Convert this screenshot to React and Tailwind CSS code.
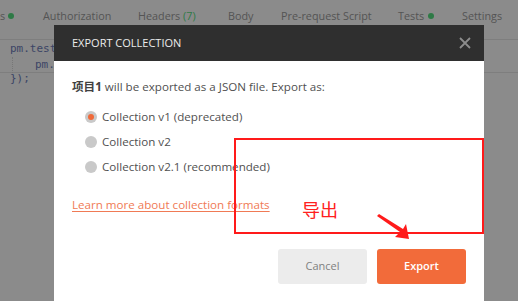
import React from "react";

const font = { fontFamily: '"Open Sans", "Noto Sans CJK SC", sans-serif' };

function Radio({ checked, label }) {
  return (
    <div className="flex h-[25px] items-center">
      <div className="ml-[13px] flex h-[12px] w-[12px] items-center justify-center rounded-full bg-[#c9c9c9]">
        {checked && <div className="h-[6px] w-[6px] rounded-full bg-[#f06a3a]" />}
      </div>
      <span className="ml-[5px] text-[11.6px] leading-[16px] text-[#505050]">{label}</span>
    </div>
  );
}

export default function App() {
  return (
    <div className="relative h-[301px] w-[518px] overflow-hidden bg-[#8b8b8b]" style={font}>
      {/* background page */}
      <div className="flex h-[40px] items-start border-b border-[#7e7e7e] pt-[8px] text-[10.8px] leading-[16px] text-[#545454]">
        <div className="flex w-[43px] items-center">
          <span>s</span>
          <span className="ml-[3px] h-[6px] w-[6px] rounded-full bg-[#2e7a46]" />
        </div>
        <div className="w-[95px]">Authorization</div>
        <div className="w-[90px]">
          Headers <span className="text-[#2e7a46]">(7)</span>
        </div>
        <div className="w-[53px]">Body</div>
        <div className="w-[117px]">Pre-request Script</div>
        <div className="flex w-[64px] items-center">
          <span>Tests</span>
          <span className="ml-[4px] h-[6px] w-[6px] rounded-full bg-[#2e7a46]" />
        </div>
        <div>Settings</div>
      </div>
      <div className="h-[33px] border-b border-[#7e7e7e] pl-[10px] pt-[1px] text-[11px] leading-[16px] text-[#3c4566]" style={{ fontFamily: '"DejaVu Sans Mono", monospace' }}>
        <div>pm.test(</div>
        <div className="ml-[2px] border-l border-dotted border-[#777] pl-[22px]">pm.r</div>
      </div>
      <div className="-mt-[2px] pl-[10px] text-[11px] leading-[16px] text-[#3c4566]" style={{ fontFamily: '"DejaVu Sans Mono", monospace' }}>
        {"});"}
      </div>

      {/* modal */}
      <div className="absolute left-[54px] top-[25px] flex h-[290px] w-[430px] flex-col bg-white">
        <div className="flex h-[36px] items-center justify-between bg-[#2f2f2f] pl-[18px] pr-[12px]">
          <span className="text-[11px] text-[#ececec]">EXPORT COLLECTION</span>
          <svg width="14" height="14" viewBox="0 0 14 14">
            <path d="M2 2 L12 12 M12 2 L2 12" stroke="#8c8c8c" strokeWidth="1.8" />
          </svg>
        </div>
        <div className="flex flex-col px-[18px] pt-[18px]">
          <div className="text-[11.6px] leading-[16px] text-[#505050]">
            <span className="font-bold text-[#404040]">项目1</span> will be exported as a JSON file. Export as:
          </div>
          <div className="mt-[9px] flex flex-col">
            <Radio checked label="Collection v1 (deprecated)" />
            <Radio label="Collection v2" />
            <Radio label="Collection v2.1 (recommended)" />
          </div>
          <div className="mt-[18px] text-[11.6px] leading-[16px] text-[#f07a55] underline underline-offset-2">
            Learn more about collection formats
          </div>
          <div className="mt-[36px] flex justify-end gap-[10px]">
            <div className="flex h-[35px] w-[89px] items-center justify-center rounded-[3px] bg-[#ececec] text-[11px] text-[#808080]">
              Cancel
            </div>
            <div className="flex h-[35px] w-[89px] items-center justify-center rounded-[3px] bg-[#f26b3a] text-[11px] font-semibold text-white">
              Export
            </div>
          </div>
        </div>
      </div>

      {/* annotation */}
      <div className="absolute left-[234px] top-[138px] h-[96px] w-[250px] border-[2.5px] border-[#ff1a1a]" />
      <div
        className="absolute left-[302px] top-[197px] text-[18px] leading-[24px] text-[#ff2020]"
        style={{ fontFamily: '"Noto Sans CJK SC", sans-serif' }}
      >
        导出
      </div>
      <svg className="absolute left-[370px] top-[210px]" width="45" height="35" viewBox="0 0 45 35">
        <polygon points="7,6 9,4 33,19 36,14 39,29 25,27 30,22" fill="#ff1a1a" />
      </svg>
    </div>
  );
}
